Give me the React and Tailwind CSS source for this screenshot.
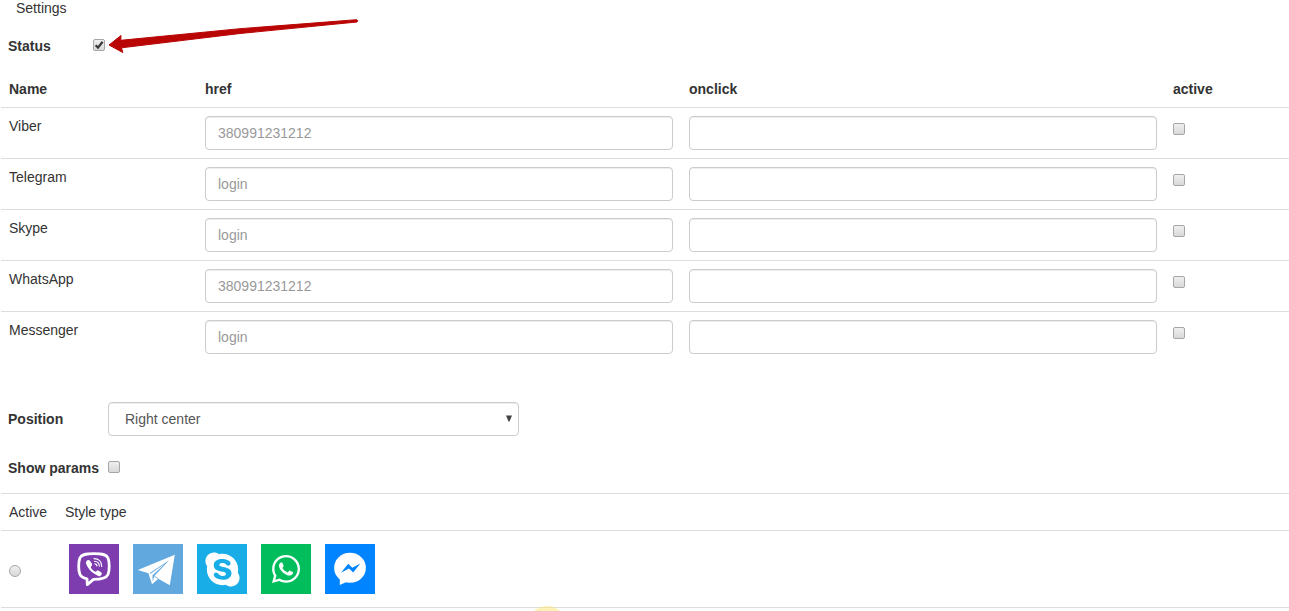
/**
 * App.jsx - Messenger widget settings
 */

import React, { useState } from 'react';
import { FaSkype, FaWhatsapp } from 'react-icons/fa';

const MESSENGERS = [
  { id: 'viber', name: 'Viber', placeholder: '380991231212' },
  { id: 'telegram', name: 'Telegram', placeholder: 'login' },
  { id: 'skype', name: 'Skype', placeholder: 'login' },
  { id: 'whatsapp', name: 'WhatsApp', placeholder: '380991231212' },
  { id: 'messenger', name: 'Messenger', placeholder: 'login' },
];

const inputClass = 'block w-full h-[34px] px-3 rounded border border-[#ccc] bg-white text-[#555] placeholder:text-[#999] shadow-[inset_0_1px_1px_rgba(0,0,0,0.075)] outline-none focus:border-[#66afe9]';
const tickClass = 'block size-3 appearance-none border border-[#a6a6a6] bg-linear-to-b from-[#efefef] to-[#d9d9d9]';

function Checkbox({ id, label, checked, onChange }) {
  return (
    <span className="relative mb-0.5 block size-3 shrink-0">
      <input id={id} type="checkbox" aria-label={label} checked={checked} onChange={onChange}
        className={`${tickClass} rounded-[2px]`} />
      {checked && (
        <svg className="absolute inset-0 pointer-events-none" width="12" height="12" viewBox="0 0 12 12">
          <path d="M2.600 6.200 L5 8.600 L9.600 2.800" fill="none" stroke="#3a3a3a" strokeWidth="2.3" />
        </svg>
      )}
    </span>
  );
}

function ViberLogo() {
  return (
    <svg width="50" height="50" viewBox="0 0 50 50">
      <path fill="none" stroke="#fff" strokeWidth="2.8" strokeLinejoin="round"
        d="M25 9.600 C34.500 9.600 37.600 10.800 39 14 C40.600 18 40.600 26.500 39 30.500 C37.500 34 33.500 35.400 24.500 35.400 L18.300 40.600 L18 34.800 C14 34 11.800 32.800 10.800 30 C9.300 26 9.300 18 10.900 14 C12.300 10.800 15.500 9.600 25 9.600 Z" />
      <path fill="#fff"
        d="M17.200 17.400 C18.500 15.700 19.900 15.500 20.900 16.800 L22.900 19.700 C23.600 20.900 22.800 21.900 21.800 22.700 C21.900 24.800 24.500 27.200 26.900 27.700 C27.700 26.700 28.600 26 29.800 26.700 L32.300 28.500 C33.500 29.500 32.900 30.700 31.300 31.900 C29.900 32.600 28.300 31.800 25.700 30.100 C21.500 27.300 18.700 23.700 17.100 19.700 C16.800 18.800 16.800 18.100 17.200 17.400 Z" />
      <g fill="none" stroke="#fff" strokeWidth="1.1" strokeLinecap="round">
        <path d="M25 14.600 C29.700 14.600 32.700 17.700 32.700 22.500" />
        <path d="M25.500 17.300 C28.500 17.400 30.200 19.200 30.300 22.100" />
        <path d="M25.900 19.900 C27.300 20 27.900 20.700 28 21.900" />
      </g>
    </svg>
  );
}

function TelegramLogo() {
  return (
    <svg width="50" height="50" viewBox="0 0 50 50">
      <path fill="#fff" d="M41.800 10.800 L4.800 26.100 L15.400 29.300 L19 40.300 L25.300 34.800 L36.800 41.200 Z" />
      <path fill="#61a8de" d="M16.800 29 L36.200 16.300 L21.500 31.800 L19.700 37.500 L19.500 31.300 L32 19.800 L17.500 29.800 Z" />
      <path fill="none" stroke="#61a8de" strokeWidth="0.8" d="M21.300 32.200 L25.400 34.600" />
    </svg>
  );
}

function MessengerLogo() {
  return (
    <svg width="50" height="50" viewBox="0 0 50 50">
      <ellipse cx="25" cy="23.800" rx="15.900" ry="15" fill="#fff" />
      <path fill="#fff" d="M14.800 33 V41 L22.500 37.500 Z" />
      <path fill="#0084ff" d="M16 28.800 L23.200 19.700 L27.300 23.800 L35.300 19.600 L28.200 28.500 L24 24.500 Z" />
    </svg>
  );
}

function Tile({ className, children }) {
  return <span className={`flex size-[50px] items-center justify-center text-white ${className}`}>{children}</span>;
}

export default function App() {
  const [status, setStatus] = useState(true);
  const [showParams, setShowParams] = useState(false);
  const [active, setActive] = useState({});

  const toggle = id => setActive(a => ({ ...a, [id]: !a[id] }));

  return (
    <div className="relative min-h-screen overflow-hidden bg-white pl-px font-['Liberation_Sans',Arial,sans-serif] text-sm leading-5 text-[#333]">
      <h1 className="px-[15px] leading-4">Settings</h1>

      {/* Status */}
      <div className="relative mt-5 flex items-center px-[7px]">
        <label htmlFor="status" className="w-[85px] font-bold">Status</label>
        <Checkbox id="status" checked={status} onChange={e => setStatus(e.target.checked)} />
        <svg className="absolute left-[106px] -top-[18px] pointer-events-none" width="254" height="38" viewBox="107 18 254 38">
          <path fill="#b90504" stroke="#b90504" strokeWidth="1" strokeLinejoin="round"
            d="M109 45 L121 35.500 L120.800 40.300 L240 28.700 L356.500 19.700 Q358.800 20.500 357 22 L240 33.500 L121.500 47.800 L122.800 52.500 Z" />
        </svg>
      </div>

      {/* Messengers */}
      <table className="mt-[15px] w-full table-fixed border-separate border-spacing-0">
        <thead>
          <tr className="text-left">
            <th className="w-49 p-2">Name</th>
            <th className="p-2">href</th>
            <th className="p-2">onclick</th>
            <th className="w-31 p-2">active</th>
          </tr>
        </thead>
        <tbody>
          {MESSENGERS.map(m => (
            <tr key={m.id} className="align-top">
              <td className="border-t border-[#ddd] p-2">{m.name}</td>
              <td className="border-t border-[#ddd] p-2">
                <input type="text" aria-label={`${m.name} href`} placeholder={m.placeholder} className={inputClass} />
              </td>
              <td className="border-t border-[#ddd] p-2">
                <input type="text" aria-label={`${m.name} onclick`} className={inputClass} />
              </td>
              <td className="border-t border-[#ddd] px-2 py-[15px]">
                <Checkbox id={m.id} label={`${m.name} active`} checked={!!active[m.id]} onChange={() => toggle(m.id)} />
              </td>
            </tr>
          ))}
        </tbody>
      </table>

      {/* Position */}
      <div className="mt-10 flex items-center px-[7px]">
        <label htmlFor="position" className="w-25 shrink-0 font-bold">Position</label>
        <div className="relative w-full max-w-[411px]">
          <select id="position" defaultValue="right-center"
            className={`${inputClass} appearance-none pl-4`}>
            <option value="right-center">Right center</option>
            <option value="right-bottom">Right bottom</option>
            <option value="left-center">Left center</option>
            <option value="left-bottom">Left bottom</option>
          </select>
          <svg className="absolute right-[7px] top-[13px] pointer-events-none" width="6" height="7" viewBox="0 0 6 7">
            <path d="M0 0.500 H6 L3.500 6.500 H2.500 Z" fill="#444" />
          </svg>
        </div>
      </div>

      <div className="mt-[22px] flex items-center px-[7px]">
        <label htmlFor="show-params" className="w-25 font-bold">Show params</label>
        <Checkbox id="show-params" checked={showParams} onChange={e => setShowParams(e.target.checked)} />
      </div>

      {/* Styles */}
      <table className="mt-[15px] w-full table-fixed border-separate border-spacing-0">
        <thead>
          <tr className="text-left">
            <th className="w-14 border-t border-[#ddd] py-2 pl-2 font-normal">Active</th>
            <th className="border-t border-[#ddd] p-2 font-normal">Style type</th>
          </tr>
        </thead>
        <tbody>
          <tr>
            <td className="border-y border-[#ddd] px-2">
              <input type="radio" name="style" aria-label="Square icons" className={`${tickClass} mt-1 rounded-full checked:border-4 checked:border-[#555]`} />
            </td>
            <td className="border-y border-[#ddd] px-3 py-[13px]">
              <div className="flex gap-[14px]">
                <Tile className="bg-[#7d3daf]"><ViberLogo /></Tile>
                <Tile className="bg-[#61a8de]"><TelegramLogo /></Tile>
                <Tile className="bg-[#18ade6]"><FaSkype size={39} /></Tile>
                <Tile className="bg-[#01bd5b]"><FaWhatsapp size={32} /></Tile>
                <Tile className="bg-[#0084ff]"><MessengerLogo /></Tile>
              </div>
            </td>
          </tr>
        </tbody>
      </table>

      {/* Pointer highlight */}
      <svg className="absolute left-[533px] top-[606px] pointer-events-none" width="28" height="5" viewBox="0 0 28 5">
        <circle cx="14" cy="20" r="20" fill="#ffe66e" fillOpacity="0.5" />
      </svg>
    </div>
  );
}
